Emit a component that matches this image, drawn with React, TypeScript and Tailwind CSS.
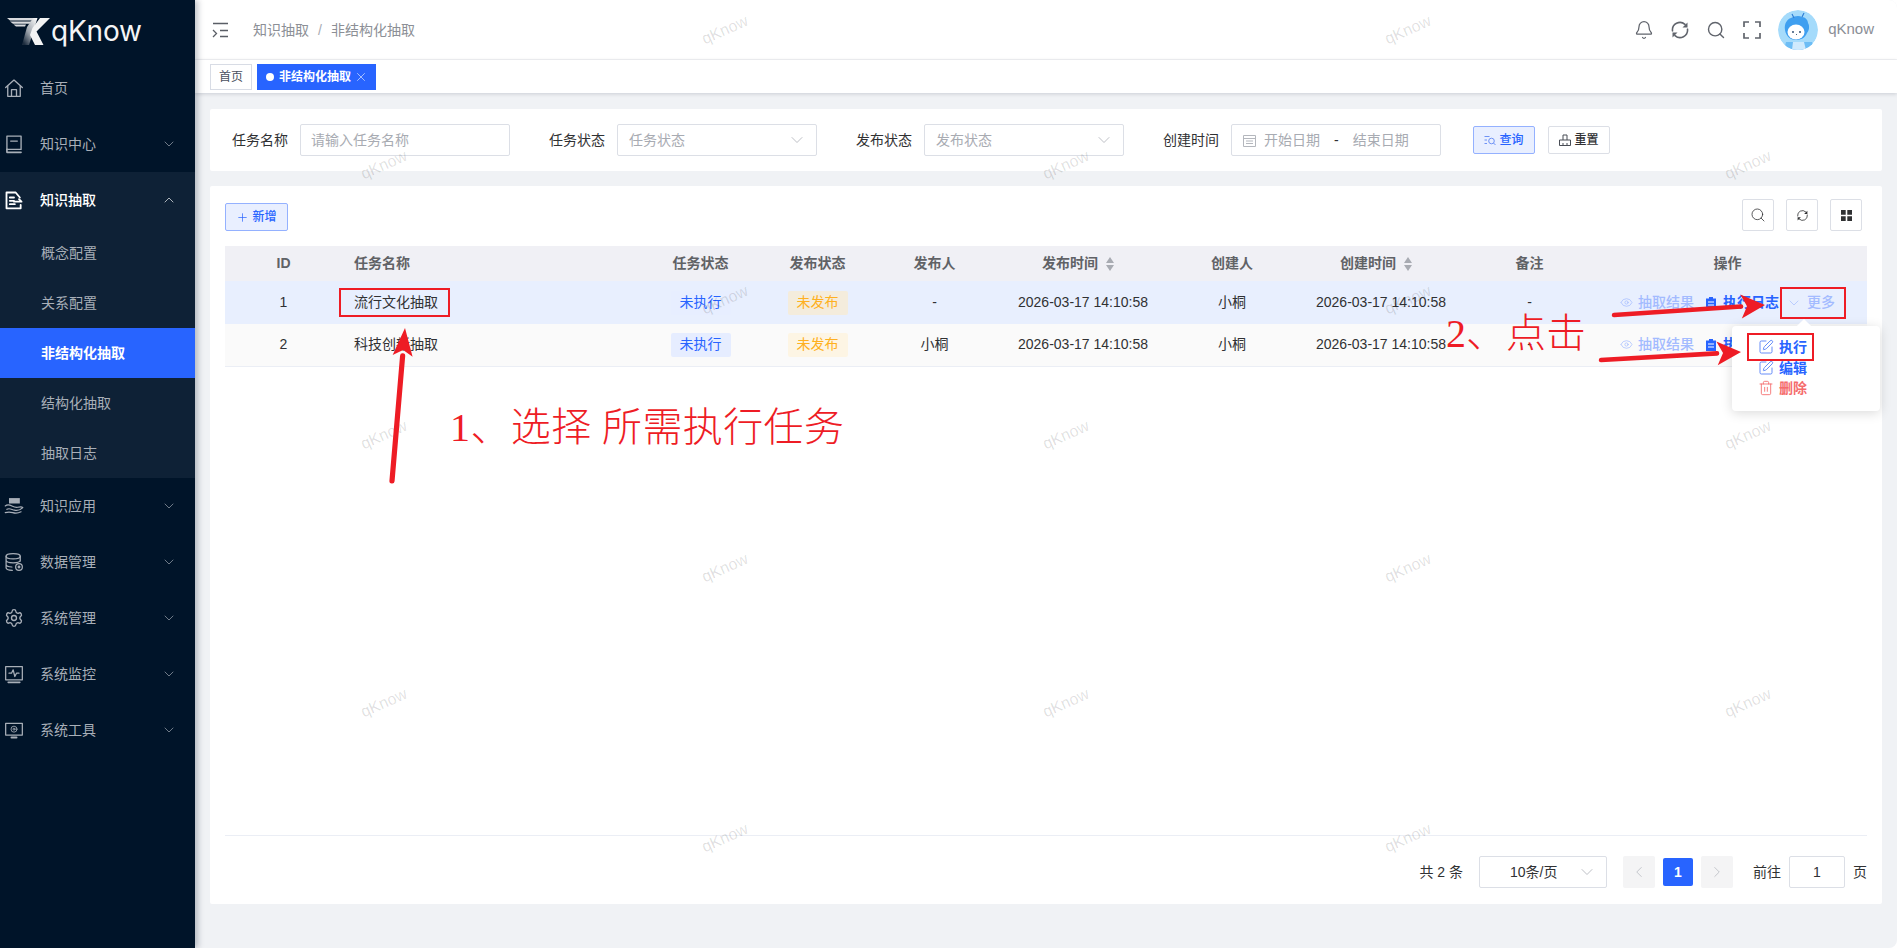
import React from "react";
import { ChevronDown, ChevronUp, ChevronLeft, ChevronRight, Settings, Bell, Search, X, Plus, Eye, SquarePen, Trash2 } from "lucide-react";

const S = ({ children, size = 20, sw = 1.6, className = "" }: { children: React.ReactNode; size?: number; sw?: number; className?: string }) => (
  <svg width={size} height={size} viewBox="0 0 24 24" fill="none" stroke="currentColor" strokeWidth={sw} strokeLinecap="round" strokeLinejoin="round" className={className}>
    {children}
  </svg>
);

const HomeI = () => (
  <S><path d="M2 11.5 12 2.5l10 9" /><path d="M4.5 9.5V22h15V9.5" /><path d="M9 22v-8h6v8" /></S>
);
const BookI = () => (
  <S><path d="M3.5 2.5h17v16h-17z" /><path d="M8 8.5h8" /><path d="M3.5 18.5v3.5h17" strokeWidth={2} /></S>
);
const FileI = () => (
  <S sw={2.2}><path d="M19 9 14 3H3v19h17v-4" /><path d="M7 9h5M7 13h5M7 17h6" /><path d="M12 14h9l-3-3" /></S>
);
const HandI = () => (
  <svg width="20" height="20" viewBox="0 0 24 24" fill="none" stroke="currentColor" strokeWidth="1.4" strokeLinecap="round">
    <path d="M6 2.5h13v6.500H6z" fill="currentColor" stroke="none" />
    <path d="M1.500 12c3-2.500 6-1 8 0s5 2 7 1.500c2-.5 5-1 6 .5-3 3-6 4-10 3-3-.5-6-3-9-1" />
    <path d="M1.500 20c3-1 6-1 9 0s7 .5 10-1" />
  </svg>
);
const DbI = () => (
  <S sw={1.5}>
    <ellipse cx="11" cy="5" rx="8.500" ry="3.200" />
    <path d="M2.500 5v14c0 1.800 3.500 3 7.500 3M19.500 5v6M2.500 10c0 1.800 3.500 3 8.500 3s8.500-1.200 8.500-3M2.500 15c0 1.500 3 2.800 7 3" />
    <circle cx="18" cy="18" r="4" /><circle cx="18" cy="18" r="1" />
  </S>
);
const MonA = () => (
  <S sw={1.5}><path d="M2 3h20v16H2z" /><path d="M6 11h3l2-4 2 8 2-4h3" /><path d="M5 22h14" strokeWidth={2} /></S>
);
const MonG = () => (
  <S sw={1.5}><path d="M2 4h20v14H2z" /><circle cx="12" cy="11" r="3.600" strokeWidth={1} /><circle cx="12" cy="11" r="1.200" strokeWidth={1} /><path d="M9 21h6" strokeWidth={2.4} /></S>
);
const RefreshI = ({ size = 18, sw = 2 }: { size?: number; sw?: number }) => (
  <svg width={size} height={size} viewBox="0 0 24 24" fill="none" stroke="currentColor" strokeWidth={sw} strokeLinecap="round">
    <path d="M3 13a9 9 0 0 1 15-7.700" />
    <path d="M21 11a9 9 0 0 1-15 7.700" />
    <path d="M21 3v6h-6z" fill="currentColor" stroke="none" />
    <path d="M3 21v-6h6z" fill="currentColor" stroke="none" />
  </svg>
);

const Logo = () => (
  <svg width="44" height="28" viewBox="0 0 44 28">
    <defs>
      <linearGradient id="lg" x1="1" y1="0" x2="0.2" y2="1">
        <stop offset="0" stopColor="#ffffff" />
        <stop offset="0.6" stopColor="#9ca3ab" />
        <stop offset="1" stopColor="#1c2c3e" />
      </linearGradient>
    </defs>
    <path d="M0 0h26v2.600H3zM3 3.400h23v2.400H6zM6.500 6.500H19l-1 2H9z" fill="#d8dadd" />
    <path d="M26 0h4.500L22 27h-7l5-18z" fill="url(#lg)" />
    <path d="M33 0h10L29.500 13.500 36.500 27h-8.500L23 17 25.500 10z" fill="#f2f3f4" />
  </svg>
);

const Avatar = () => (
  <svg width="40" height="40" viewBox="0 0 40 40" className="rounded-full">
    <circle cx="20" cy="20" r="20" fill="#a5dbfb" />
    <path d="M6 40 8 32h26l3 8z" fill="#6dbdf5" />
    <path d="M15 32h11l2 8H14z" fill="#cfeafd" />
    <path d="M7 20c-1-6 2-11 6-12 3-2 8-3 11-1 3 0 6 3 6 6 2 3 1 8-1 10-2 5-6 7-11 7-6 0-10-4-11-10z" fill="#3f9ff0" />
    <ellipse cx="18" cy="22" rx="8.500" ry="7.500" fill="#ffffff" />
    <path d="M16 8 14 4M24 7l2-4" stroke="#2f7fd6" strokeWidth="1.200" />
    <circle cx="15" cy="22" r="0.900" fill="#1d3f66" /><circle cx="22" cy="22" r="0.900" fill="#1d3f66" />
    <path d="M18 24.500h1" stroke="#1d3f66" strokeWidth="0.800" />
  </svg>
);

type Menu = { icon: React.ReactNode; label: string; plain?: boolean };
const menusB: Menu[] = [
  { icon: <HandI />, label: "知识应用" },
  { icon: <DbI />, label: "数据管理" },
  { icon: <Settings size={20} strokeWidth={1.6} />, label: "系统管理" },
  { icon: <MonA />, label: "系统监控" },
  { icon: <MonG />, label: "系统工具" },
];

const MenuRow = ({ icon, label, plain }: Menu) => (
  <div className="flex h-[56px] items-center pl-[4px] pr-[18px] text-[14px] text-[#a8afb8]">
    <span className="flex w-[20px] justify-center">{icon}</span>
    <span className="ml-[16px] flex-1">{label}</span>
    {!plain && <ChevronDown size={16} strokeWidth={1} />}
  </div>
);

const Sidebar = () => (
  <aside className="relative z-10 flex w-[195px] shrink-0 flex-col bg-[#001429] shadow-[3px_0_6px_rgba(0,21,41,0.25)]">
    <div className="flex h-[60px] items-start pl-[7px] pt-[18px]">
      <Logo />
      <span className="mt-[-4px] font-['Inter',sans-serif] text-[28px] font-normal leading-[34px] tracking-[-0.2px] text-[#f4f5f6]">qKnow</span>
    </div>
    <MenuRow icon={<HomeI />} label="首页" plain />
    <MenuRow icon={<BookI />} label="知识中心" />
    <div className="bg-[#0e2136]">
      <div className="flex h-[56px] items-center pl-[4px] pr-[18px] text-[14px] font-medium text-white">
        <span className="flex w-[20px] justify-center"><FileI /></span>
        <span className="ml-[16px] flex-1">知识抽取</span>
        <ChevronUp size={16} strokeWidth={1} />
      </div>
      {["概念配置", "关系配置", "非结构化抽取", "结构化抽取", "抽取日志"].map((t) => (
        <div key={t} className={`flex h-[50px] items-center pl-[41px] text-[14px] ${t === "非结构化抽取" ? "bg-[#2864ff] font-bold text-white" : "text-[#a8afb8]"}`}>
          {t}
        </div>
      ))}
    </div>
    {menusB.map((m) => <MenuRow key={m.label} {...m} />)}
  </aside>
);

const Header = () => (
  <header className="flex h-[60px] items-center border-b border-[#f2f3f5] bg-white pl-[17px] pr-[23px]">
    <svg width="16" height="16" viewBox="0 0 16 16" fill="none" stroke="#5a5e66" strokeWidth="1.300">
      <path d="M1 1.500h15M8 8.500h8M8 14.500h8" />
      <path d="M1 8l3.500 3.500L1 15" />
    </svg>
    <span className="ml-[25px] pt-px text-[14px] text-[#8c8f96]">知识抽取</span>
    <span className="mx-[9px] pt-px text-[14px] text-[#a8abb2]">/</span>
    <span className="pt-px text-[14px] text-[#8c8f96]">非结构化抽取</span>
    <div className="flex-1" />
    <div className="flex items-center gap-[16px] text-[#60646c]">
      <Bell size={20} strokeWidth={1.5} />
      <RefreshI size={20} sw={1.9} />
      <Search size={20} strokeWidth={1.7} />
      <svg width="20" height="20" viewBox="0 0 20 20" fill="none" stroke="currentColor" strokeWidth="1.700">
        <path d="M2 7V2h5M13 2h5v5M18 13v5h-5M7 18H2v-5" />
      </svg>
    </div>
    <div className="ml-[16px]"><Avatar /></div>
    <span className="ml-[10px] text-[15px] text-[#8a8e96]">qKnow</span>
  </header>
);

const Tags = () => (
  <div className="relative z-[1] flex h-[33px] items-start gap-[5px] bg-white pl-[15px] pt-[4px] shadow-[0_1px_4px_rgba(0,21,41,0.16)]">
    <div className="flex h-[26px] w-[42px] items-center justify-center border border-[#d8dce5] text-[12px] text-[#495060]">首页</div>
    <div className="flex h-[26px] w-[119px] items-center bg-[#2864ff] pl-[9px] text-[12px] font-bold text-white">
      <span className="mr-[5px] h-[8px] w-[8px] rounded-full bg-white" />
      非结构化抽取
      <X size={14} strokeWidth={1} className="ml-[3px]" />
    </div>
  </div>
);

const Field = ({ label, first, children }: { label: string; first?: boolean; children: React.ReactNode }) => (
  <div className={`flex items-center ${first ? "" : "ml-[39px]"}`}>
    <span className="mr-[12px] w-[56px] text-[14px] text-[#303133]">{label}</span>
    {children}
  </div>
);

const Sel = ({ text }: { text: string }) => (
  <div className="flex h-[32px] w-[200px] items-center justify-between rounded-[2px] border border-[#dcdfe6] pl-[11px] pr-[9px] text-[14px] text-[#a8abb2]">
    {text}
    <ChevronDown size={20} strokeWidth={0.9} className="text-[#a8abb2]" />
  </div>
);

const SearchCard = () => (
  <section className="flex h-[62px] items-center rounded-[2px] bg-white pl-[22px]">
    <Field label="任务名称" first>
      <div className="flex h-[32px] w-[210px] items-center rounded-[2px] border border-[#dcdfe6] pl-[10px] text-[14px] text-[#a8abb2]">请输入任务名称</div>
    </Field>
    <Field label="任务状态"><Sel text="任务状态" /></Field>
    <Field label="发布状态"><Sel text="发布状态" /></Field>
    <Field label="创建时间">
      <div className="flex h-[32px] w-[210px] items-center rounded-[2px] border border-[#dcdfe6] pl-[11px] text-[14px] text-[#a8abb2]">
        <svg width="13" height="13" viewBox="0 0 13 13" fill="none" stroke="#b4b7bd" strokeWidth="1">
          <path d="M.5 1.500h12v11H.5zM.5 4.500h12M3 7h7M3 9.500h7" />
        </svg>
        <span className="ml-[8px]">开始日期</span>
        <span className="ml-[14px] text-[#303133]">-</span>
        <span className="ml-[14px]">结束日期</span>
      </div>
    </Field>
    <button className="ml-[32px] flex h-[28px] w-[62px] items-center justify-center gap-[3px] rounded-[2px] border border-[#94b1ff] bg-[#e9efff] text-[12px] font-medium text-[#2864ff]">
      <svg width="12" height="12" viewBox="0 0 12 12" fill="none" stroke="#6f92f5" strokeWidth="1">
        <path d="M.5 2.500h5M.5 6h2.500M.5 9.500h2.500" /><circle cx="7.500" cy="7" r="2.800" /><path d="m9.500 9 2 2" />
      </svg>
      查询
    </button>
    <button className="ml-[13px] flex h-[28px] w-[62px] items-center justify-center gap-[3px] rounded-[2px] border border-[#dcdfe6] bg-white text-[12px] font-medium text-[#303133]">
      <svg width="12" height="12" viewBox="0 0 12 12" fill="none" stroke="#494d55" strokeWidth="1">
        <path d="M.5 6h11v5.500H.5zM4 6V1h4v5M4 11.500V9M8 11.500V9" />
      </svg>
      重置
    </button>
  </section>
);

const Sort = () => (
  <span className="ml-[8px] inline-flex flex-col gap-[2px] align-middle">
    <span className="h-0 w-0 border-x-[4.500px] border-b-[6px] border-x-transparent border-b-[#a8abb2]" />
    <span className="h-0 w-0 border-x-[4.500px] border-t-[6px] border-x-transparent border-t-[#a8abb2]" />
  </span>
);

const Ops = () => (
  <div className="flex items-center pl-[32px] text-[14px] font-medium">
    <Eye size={13} strokeWidth={1.300} className="text-[#a3bbff]" />
    <span className="ml-[5px] text-[#a3bbff]">抽取结果</span>
    <svg width="10" height="12" viewBox="0 0 10 12" className="ml-[12px]"><path d="M0 1.500h3V0h4v1.500h3V12H0z" fill="#2864ff" /><path d="M2 5h6M2 8h6" stroke="#fff" strokeWidth="1" /></svg>
    <span className="ml-[7px] font-bold text-[#2864ff]">执行日志</span>
    <ChevronDown size={16} strokeWidth={1} className="ml-[7px] text-[#a3bbff]" />
    <span className="ml-[5px] text-[#a3bbff]">更多</span>
  </div>
);

const Tag = ({ kind, strong }: { kind: "run" | "pub"; strong?: boolean }) =>
  kind === "run" ? (
    <span className={`inline-flex h-[24px] w-[60px] items-center justify-center rounded-[2px] text-[14px] text-[#2864ff] ${strong ? "bg-[#e6edff]" : "bg-[#e7eeff]"}`}>未执行</span>
  ) : (
    <span className={`inline-flex h-[24px] w-[60px] items-center justify-center rounded-[2px] text-[14px] text-[#ffb020] ${strong ? "bg-[#fdf5e4]" : "bg-[#f4ecdc]"}`}>未发布</span>
  );

const Row = ({ id, name, pub, cls, strong }: { id: number; name: string; pub: string; cls: string; strong?: boolean }) => (
  <tr className={cls}>
    <td className="text-center">{id}</td>
    <td className="pl-[12px]">{name}</td>
    <td className="text-center"><Tag kind="run" strong={strong} /></td>
    <td className="text-center"><Tag kind="pub" strong={strong} /></td>
    <td className="text-center">{pub}</td>
    <td className="text-center">2026-03-17 14:10:58</td>
    <td className="text-center">小桐</td>
    <td className="text-center">2026-03-17 14:10:58</td>
    <td className="text-center">-</td>
    <td><Ops /></td>
  </tr>
);

const TableCard = () => (
  <section className="mt-[15px] flex h-[718px] flex-col rounded-[2px] bg-white px-[15px] pt-[13px]">
    <div className="mb-[15px] flex h-[32px] items-end justify-between">
      <button className="flex h-[28px] w-[63px] items-center justify-center gap-[3px] rounded-[2px] border border-[#94b1ff] bg-[#e9efff] text-[12px] font-medium text-[#2864ff]">
        <Plus size={13} strokeWidth={1.300} />新增
      </button>
      <div className="mr-[5px] flex gap-[12px]">
        <div className="flex h-[32px] w-[32px] items-center justify-center rounded-[2px] border border-[#dcdfe6] text-[#303133]"><Search size={16} strokeWidth={1.200} /></div>
        <div className="flex h-[32px] w-[32px] items-center justify-center rounded-[2px] border border-[#dcdfe6] text-[#303133]"><RefreshI size={13} sw={1.500} /></div>
        <div className="flex h-[32px] w-[32px] items-center justify-center rounded-[2px] border border-[#dcdfe6]">
          <svg width="11" height="11" viewBox="0 0 11 11" fill="#303133"><path d="M0 0h4.700v4.700H0zM6.300 0H11v4.700H6.300zM0 6.300h4.700V11H0zM6.300 6.300H11V11H6.300z" /></svg>
        </div>
      </div>
    </div>
    <table className="w-[1642px] table-fixed border-collapse text-[14px] text-[#303133]">
      <colgroup>
        <col className="w-[117px]" /><col className="w-[300px]" /><col className="w-[117px]" /><col className="w-[117px]" /><col className="w-[117px]" />
        <col className="w-[180px]" /><col className="w-[118px]" /><col className="w-[180px]" /><col className="w-[117px]" /><col className="w-[279px]" />
      </colgroup>
      <thead>
        <tr className="h-[35px] bg-[#f0f0f5] font-bold text-[#606266]">
          <th className="text-center">ID</th>
          <th className="pl-[12px] text-left">任务名称</th>
          <th>任务状态</th>
          <th>发布状态</th>
          <th>发布人</th>
          <th className="pr-[10px]">发布时间<Sort /></th>
          <th>创建人</th>
          <th className="pr-[10px]">创建时间<Sort /></th>
          <th>备注</th>
          <th>操作</th>
        </tr>
      </thead>
      <tbody>
        <Row id={1} name="流行文化抽取" pub="-" cls="h-[43px] bg-[#e8effe]" />
        <Row id={2} name="科技创新抽取" pub="小桐" cls="h-[42px] border-b border-[#ebeef5] bg-[#fafafa]" strong />
      </tbody>
    </table>
    <div className="flex-1" />
    <div className="flex h-[69px] items-start justify-end border-t border-[#ebeef5] pt-[20px] text-[14px] text-[#303133]">
      <span className="mr-[16px] mt-[6px]">共 2 条</span>
      <div className="flex h-[32px] w-[128px] items-center justify-between rounded-[2px] border border-[#dcdfe6] pl-[30px] pr-[9px]">
        10条/页
        <ChevronDown size={20} strokeWidth={0.9} className="text-[#a8abb2]" />
      </div>
      <div className="ml-[16px] flex h-[32px] w-[32px] items-center justify-center rounded-[2px] bg-[#f4f4f5] text-[#b4b7bd]"><ChevronLeft size={18} strokeWidth={1} /></div>
      <div className="ml-[8px] mt-[2px] flex h-[28px] w-[30px] items-center justify-center rounded-[2px] bg-[#2864ff] font-bold text-white">1</div>
      <div className="ml-[8px] flex h-[32px] w-[32px] items-center justify-center rounded-[2px] bg-[#f4f4f5] text-[#b4b7bd]"><ChevronRight size={18} strokeWidth={1} /></div>
      <span className="ml-[20px] mt-[6px]">前往</span>
      <div className="ml-[8px] flex h-[32px] w-[56px] items-center justify-center rounded-[2px] border border-[#dcdfe6]">1</div>
      <span className="ml-[8px] mt-[6px]">页</span>
    </div>
  </section>
);

const marks: [number, number][] = [];
[30, 300, 568, 838].forEach((y) => [725, 1408].forEach((x) => marks.push([x, y])));
[165, 435, 703].forEach((y) => [384, 1066, 1748].forEach((x) => marks.push([x, y])));

const Dropdown = () => (
  <div className="absolute left-[1732px] top-[326px] z-30 h-[85px] w-[148px] rounded-[4px] bg-white pl-[26px] pt-[10px] text-[14px] font-bold shadow-[0_2px_12px_rgba(0,0,0,0.15)]">
    <span className="absolute left-[67px] top-[-5px] h-[10px] w-[10px] rotate-45 bg-white" />
    <div className="flex h-[22px] items-center text-[#2864ff]"><SquarePen size={16} strokeWidth={1.300} className="text-[#4f7cf7]" /><span className="ml-[5px]">执行</span></div>
    <div className="flex h-[20px] items-center text-[#2864ff]"><SquarePen size={16} strokeWidth={1.300} className="text-[#4f7cf7]" /><span className="ml-[5px]">编辑</span></div>
    <div className="flex h-[20px] items-center text-[#f56c6c]"><Trash2 size={16} strokeWidth={1.300} /><span className="ml-[5px]">删除</span></div>
  </div>
);

const Arrow = ({ x1, y1, x2, y2, w = 4, hw = 12, hl = 26 }: { x1: number; y1: number; x2: number; y2: number; w?: number; hw?: number; hl?: number }) => {
  const dx = x2 - x1, dy = y2 - y1, L = Math.hypot(dx, dy), ux = dx / L, uy = dy / L;
  const bx = x2 - ux * hl, by = y2 - uy * hl, nx = -uy, ny = ux;
  return (
    <g>
      <path d={`M${x1} ${y1}L${bx} ${by}`} stroke="#ee1c25" strokeWidth={w * 1.3} strokeLinecap="round" />
      <path d={`M${x2} ${y2}L${bx + nx * hw} ${by + ny * hw}L${bx + ux * 6} ${by + uy * 6}L${bx - nx * hw} ${by - ny * hw}Z`} fill="#ee1c25" />
    </g>
  );
};

const Overlay = () => (
  <>
    <Dropdown />
    <div className="pointer-events-none absolute inset-0 z-40 overflow-hidden">
      {marks.map(([x, y]) => (
        <span key={`${x}-${y}`} className="absolute -translate-x-1/2 -translate-y-1/2 -rotate-[24deg] text-[16px] text-[rgba(0,0,0,0.13)]" style={{ left: x, top: y }}>qKnow</span>
      ))}
    </div>
    <div className="absolute left-[339px] top-[288px] z-50 h-[29px] w-[111px] border-2 border-[#ee1c25]" />
    <div className="absolute left-[1780px] top-[287px] z-50 h-[32px] w-[66px] border-2 border-[#ee1c25]" />
    <div className="absolute left-[1747px] top-[333px] z-50 h-[28px] w-[67px] border-2 border-[#ee1c25]" />
    <svg width="1897" height="948" className="pointer-events-none absolute left-0 top-0 z-50">
      <Arrow x1={392} y1={481} x2={405} y2={328} w={4} hw={10} hl={28} />
      <Arrow x1={1614} y1={315} x2={1765} y2={305} w={3.500} hw={12} hl={24} />
      <Arrow x1={1601} y1={360} x2={1741} y2={352} w={3.500} hw={12} hl={24} />
    </svg>
    <div className="absolute left-[450px] top-[404px] z-50 whitespace-pre text-[40px] font-light leading-[48px] tracking-[0.4px] text-[#ee1c25] font-['Liberation_Serif','Noto_Sans_CJK_SC',serif]">1、选择 所需执行任务</div>
    <div className="absolute left-[1446px] top-[310px] z-50 whitespace-pre text-[40px] font-light leading-[48px] text-[#ee1c25] font-['Liberation_Serif','Noto_Sans_CJK_SC',serif]">2、点击</div>
  </>
);

export default function App() {
  return (
    <div className="relative flex h-[948px] w-[1897px] overflow-hidden rounded-r-[8px] bg-[#f0f2f5] font-['Liberation_Sans','Noto_Sans_CJK_SC',sans-serif]">
      <Sidebar />
      <main className="flex min-w-0 flex-1 flex-col">
        <Header />
        <Tags />
        <div className="flex-1 px-[15px] pt-[16px]">
          <SearchCard />
          <TableCard />
        </div>
      </main>
      <Overlay />
    </div>
  );
}
